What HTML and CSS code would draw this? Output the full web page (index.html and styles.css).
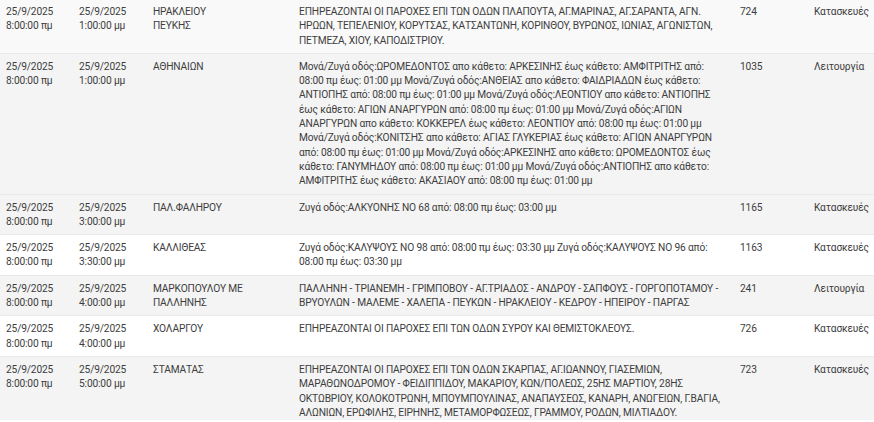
FILE: index.html
```html
<!DOCTYPE html>
<html lang="el">
<head>
<meta charset="utf-8">
<title>Διακοπές ρεύματος</title>
<link rel="stylesheet" href="styles.css">
</head>
<body>
<div class="wrap">
<table class="outages">
  <colgroup>
    <col class="c-from"><col class="c-to"><col class="c-area"><col class="c-desc"><col class="c-id"><col class="c-type">
  </colgroup>
  <tbody>
    <tr class="r-first">
      <td>25/9/2025 8:00:00 πμ</td>
      <td>25/9/2025 1:00:00 μμ</td>
      <td class="area">ΗΡΑΚΛΕΙΟΥ ΠΕΥΚΗΣ</td>
      <td class="desc">ΕΠΗΡΕΑΖΟΝΤΑΙ ΟΙ ΠΑΡΟΧΕΣ ΕΠΙ ΤΩΝ ΟΔΩΝ ΠΛΑΠΟΥΤΑ, ΑΓ.ΜΑΡΙΝΑΣ, ΑΓ.ΣΑΡΑΝΤΑ, ΑΓΝ. ΗΡΩΩΝ, ΤΕΠΕΛΕΝΙΟΥ, ΚΟΡΥΤΣΑΣ, ΚΑΤΣΑΝΤΩΝΗ, ΚΟΡΙΝΘΟΥ, ΒΥΡΩΝΟΣ, ΙΩΝΙΑΣ, ΑΓΩΝΙΣΤΩΝ, ΠΕΤΜΕΖΑ, ΧΙΟΥ, ΚΑΠΟΔΙΣΤΡΙΟΥ.</td>
      <td>724</td>
      <td>Κατασκευές</td>
    </tr>
    <tr class="r-gray">
      <td>25/9/2025 8:00:00 πμ</td>
      <td>25/9/2025 1:00:00 μμ</td>
      <td class="area">ΑΘΗΝΑΙΩΝ</td>
      <td class="desc">Μονά/Ζυγά οδός:ΩΡΟΜΕΔΟΝΤΟΣ απο κάθετο: ΑΡΚΕΣΙΝΗΣ έως κάθετο: ΑΜΦΙΤΡΙΤΗΣ από: 08:00 πμ έως: 01:00 μμ Μονά/Ζυγά οδός:ΑΝΘΕΙΑΣ απο κάθετο: ΦΑΙΔΡΙΑΔΩΝ έως κάθετο: ΑΝΤΙΟΠΗΣ από: 08:00 πμ έως: 01:00 μμ Μονά/Ζυγά οδός:ΛΕΟΝΤΙΟΥ απο κάθετο: ΑΝΤΙΟΠΗΣ έως κάθετο: ΑΓΙΩΝ ΑΝΑΡΓΥΡΩΝ από: 08:00 πμ έως: 01:00 μμ Μονά/Ζυγά οδός:ΑΓΙΩΝ ΑΝΑΡΓΥΡΩΝ απο κάθετο: ΚΟΚΚΕΡΕΛ έως κάθετο: ΛΕΟΝΤΙΟΥ από: 08:00 πμ έως: 01:00 μμ Μονά/Ζυγά οδός:ΚΟΝΙΤΣΗΣ απο κάθετο: ΑΓΙΑΣ ΓΛΥΚΕΡΙΑΣ έως κάθετο: ΑΓΙΩΝ ΑΝΑΡΓΥΡΩΝ από: 08:00 πμ έως: 01:00 μμ Μονά/Ζυγά οδός:ΑΡΚΕΣΙΝΗΣ απο κάθετο: ΩΡΟΜΕΔΟΝΤΟΣ έως κάθετο: ΓΑΝΥΜΗΔΟΥ από: 08:00 πμ έως: 01:00 μμ Μονά/Ζυγά οδός:ΑΝΤΙΟΠΗΣ απο κάθετο: ΑΜΦΙΤΡΙΤΗΣ έως κάθετο: ΑΚΑΣΙΑΟΥ από: 08:00 πμ έως: 01:00 μμ</td>
      <td>1035</td>
      <td>Λειτουργία</td>
    </tr>
    <tr class="r-gray">
      <td>25/9/2025 8:00:00 πμ</td>
      <td>25/9/2025 3:00:00 μμ</td>
      <td class="area">ΠΑΛ.ΦΑΛΗΡΟΥ</td>
      <td class="desc">Ζυγά οδός:ΑΛΚΥΟΝΗΣ ΝΟ 68 από: 08:00 πμ έως: 03:00 μμ</td>
      <td>1165</td>
      <td>Κατασκευές</td>
    </tr>
    <tr class="r-white">
      <td>25/9/2025 8:00:00 πμ</td>
      <td>25/9/2025 3:30:00 μμ</td>
      <td class="area">ΚΑΛΛΙΘΕΑΣ</td>
      <td class="desc">Ζυγά οδός:ΚΑΛΥΨΟΥΣ ΝΟ 98 από: 08:00 πμ έως: 03:30 μμ Ζυγά οδός:ΚΑΛΥΨΟΥΣ ΝΟ 96 από: 08:00 πμ έως: 03:30 μμ</td>
      <td>1163</td>
      <td>Κατασκευές</td>
    </tr>
    <tr class="r-gray">
      <td>25/9/2025 8:00:00 πμ</td>
      <td>25/9/2025 4:00:00 μμ</td>
      <td class="area">ΜΑΡΚΟΠΟΥΛΟΥ ΜΕ ΠΑΛΛΗΝΗΣ</td>
      <td class="desc">ΠΑΛΛΗΝΗ - ΤΡΙΑΝΕΜΗ - ΓΡΙΜΠΟΒΟΥ - ΑΓ.ΤΡΙΑΔΟΣ - ΑΝΔΡΟΥ - ΣΑΠΦΟΥΣ - ΓΟΡΓΟΠΟΤΑΜΟΥ - ΒΡΥΟΥΛΩΝ - ΜΑΛΕΜΕ - ΧΑΛΕΠΑ - ΠΕΥΚΩΝ - ΗΡΑΚΛΕΙΟΥ - ΚΕΔΡΟΥ - ΗΠΕΙΡΟΥ - ΠΑΡΓΑΣ</td>
      <td>241</td>
      <td>Λειτουργία</td>
    </tr>
    <tr class="r-white">
      <td>25/9/2025 8:00:00 πμ</td>
      <td>25/9/2025 4:00:00 μμ</td>
      <td class="area">ΧΟΛΑΡΓΟΥ</td>
      <td class="desc">ΕΠΗΡΕΑΖΟΝΤΑΙ ΟΙ ΠΑΡΟΧΕΣ ΕΠΙ ΤΩΝ ΟΔΩΝ ΣΥΡΟΥ ΚΑΙ ΘΕΜΙΣΤΟΚΛΕΟΥΣ.</td>
      <td>726</td>
      <td>Κατασκευές</td>
    </tr>
    <tr class="r-gray">
      <td>25/9/2025 8:00:00 πμ</td>
      <td>25/9/2025 5:00:00 μμ</td>
      <td class="area">ΣΤΑΜΑΤΑΣ</td>
      <td class="desc">ΕΠΗΡΕΑΖΟΝΤΑΙ ΟΙ ΠΑΡΟΧΕΣ ΕΠΙ ΤΩΝ ΟΔΩΝ ΣΚΑΡΠΑΣ, ΑΓ.ΙΩΑΝΝΟΥ, ΓΙΑΣΕΜΙΩΝ, ΜΑΡΑΘΩΝΟΔΡΟΜΟΥ - ΦΕΙΔΙΠΠΙΔΟΥ, ΜΑΚΑΡΙΟΥ, ΚΩΝ/ΠΟΛΕΩΣ, 25ΗΣ ΜΑΡΤΙΟΥ, 28ΗΣ ΟΚΤΩΒΡΙΟΥ, ΚΟΛΟΚΟΤΡΩΝΗ, ΜΠΟΥΜΠΟΥΛΙΝΑΣ, ΑΝΑΠΑΥΣΕΩΣ, ΚΑΝΑΡΗ, ΑΝΩΓΕΙΩΝ, Γ.ΒΑΓΙΑ, ΑΛΩΝΙΩΝ, ΕΡΩΦΙΛΗΣ, ΕΙΡΗΝΗΣ, ΜΕΤΑΜΟΡΦΩΣΕΩΣ, ΓΡΑΜΜΟΥ, ΡΟΔΩΝ, ΜΙΛΤΙΑΔΟΥ.</td>
      <td>723</td>
      <td>Κατασκευές</td>
    </tr>
  </tbody>
</table>
</div>
</body>
</html>
```
FILE: styles.css
```css
html, body {
  margin: 0;
  padding: 0;
  background: #ffffff;
}
.wrap {
  width: 874px;
  height: 422px;
  overflow: hidden;
  margin-top: -2px;
}
.outages {
  width: 874px;
  border-collapse: collapse;
  table-layout: fixed;
  font-family: Roboto, "Liberation Sans", sans-serif;
  font-size: 10.2px;
  letter-spacing: -0.15px;
  line-height: 14.3px;
  color: #3d3d3d;
}
.c-from { width: 73px; }
.c-to { width: 74px; }
.c-area { width: 146px; }
.c-desc { width: 441px; }
.c-id { width: 74px; }
.c-type { width: 66px; }
.outages td {
  vertical-align: top;
  padding: 6px 6px 5px 6px;
  border-top: 1px solid #e9e9e9;
  text-align: left;
}
.outages td.area { padding-right: 50px; }
.outages td.desc { padding-right: 9px; }
.r-first td { background: #f9f9f9; }
.r-gray td { background: #f4f4f4; }
.r-white td { background: #ffffff; }
```
